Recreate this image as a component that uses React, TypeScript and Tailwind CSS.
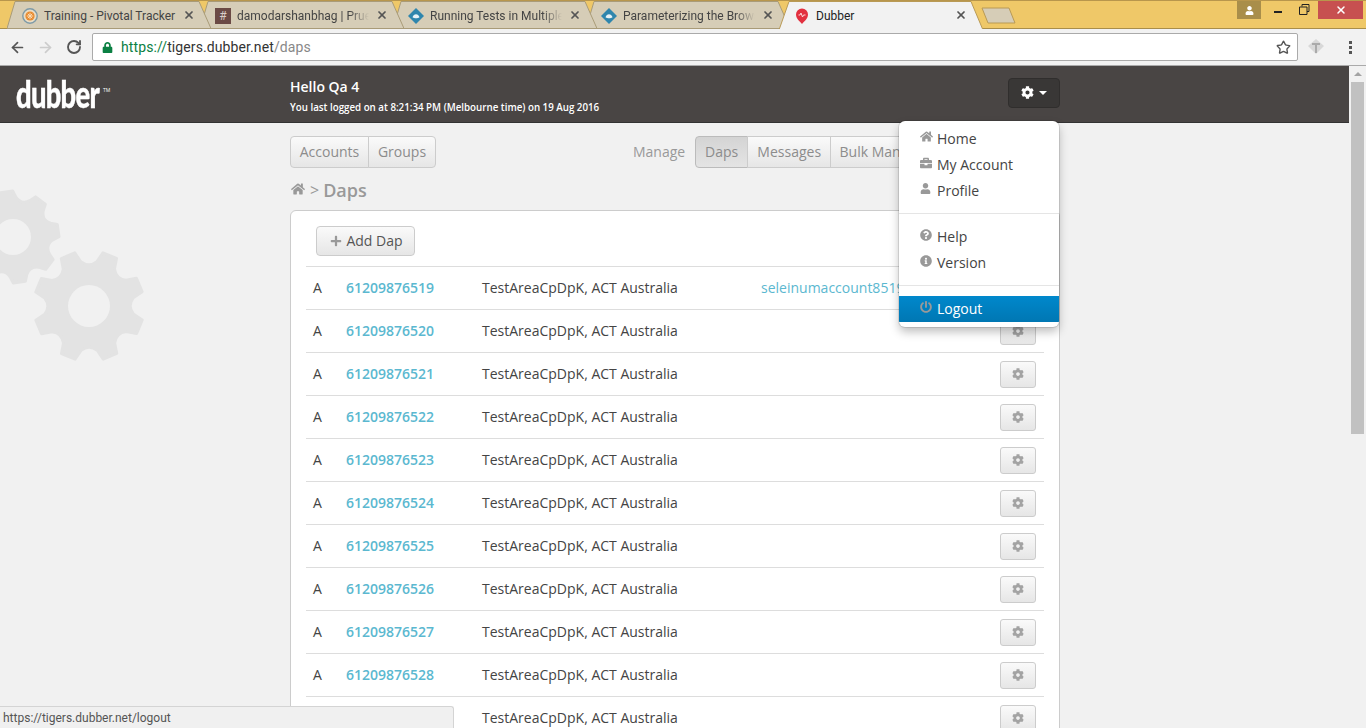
import React from 'react';
import { ArrowLeft, ArrowRight, RotateCw, Star, X } from 'lucide-react';
import {
  FaBriefcase,
  FaCog,
  FaHome,
  FaInfoCircle,
  FaLock,
  FaPlus,
  FaPowerOff,
  FaQuestionCircle,
  FaUser,
} from 'react-icons/fa';

const numbers = [
  '61209876519',
  '61209876520',
  '61209876521',
  '61209876522',
  '61209876523',
  '61209876524',
  '61209876525',
  '61209876526',
  '61209876527',
  '61209876528',
  '61209876529',
];

// builds a gear outline with rounded valleys between the teeth
function gearPath(cx: number, cy: number, outer: number, root: number, teeth: number, phase: number) {
  const step = (Math.PI * 2) / teeth;
  const pt = (r: number, a: number) => `${(cx + r * Math.sin(a)).toFixed(2)} ${(cy - r * Math.cos(a)).toFixed(2)}`;
  let d = '';
  for (let i = 0; i < teeth; i++) {
    const a = phase + i * step;
    d += `${i === 0 ? 'M' : 'L'}${pt(root + 3, a - step * 0.27)} `;
    d += `L${pt(outer, a - step * 0.17)} L${pt(outer, a + step * 0.17)} L${pt(root + 3, a + step * 0.27)} `;
    d += `Q${pt(root - 4, a + step * 0.5)} ${pt(root + 3, a + step * 0.73)} `;
  }
  return d + 'Z';
}

const Gears = () => (
  <svg className="absolute left-0 top-[114px]" width="160" height="190" viewBox="0 0 160 190">
    <g fill="#e3e3e3" stroke="#e3e3e3" strokeWidth="3" strokeLinejoin="round">
      <path d={gearPath(13, 57, 46, 37, 8, -0.14)} />
      <path d={gearPath(89, 126, 55, 42, 8, 0.39)} />
    </g>
    <circle cx="13" cy="57" r="18" fill="#f1f1f1" />
    <circle cx="89" cy="126" r="21" fill="#f1f1f1" />
  </svg>
);

const Favicon = ({ kind }: { kind: string }) => {
  if (kind === 'pivotal') {
    return (
      <svg width="16" height="16" viewBox="0 0 16 16">
        <circle cx="8" cy="8" r="7.2" fill="#e9dcc4" stroke="#7d9aa8" strokeWidth="1.4" />
        <circle cx="8" cy="8" r="4.6" fill="#e98a2e" />
        <path d="M8 4.8v6.4M4.8 8h6.4M5.8 5.8l4.4 4.4M10.2 5.8l-4.4 4.4" stroke="#f8dcb8" strokeWidth="1" />
      </svg>
    );
  }
  if (kind === 'hash') {
    return (
      <div className="w-[16px] h-[16px] bg-[#6b4a45] text-[#d8cdc8] text-[12px] leading-[16px] text-center">#</div>
    );
  }
  if (kind === 'diamond') {
    return (
      <svg width="16" height="16" viewBox="0 0 16 16">
        <path d="M8 0l8 8-8 8-8-8z" fill="#2f86ad" />
        <path d="M4.5 9.2c.6-1.8 2-3 3.5-3s2.900 1.200 3.500 3c-1 .8-2.200 1-3.500 1s-2.500-.2-3.500-1z" fill="#e8f2f6" />
      </svg>
    );
  }
  return (
    <svg width="14" height="16" viewBox="0 0 14 16">
      <path d="M7 16C5 13.600 1 10.800 1 6.600A6 6 0 0 1 13 6.600C13 10.800 9 13.600 7 16z" fill="#e2303f" />
      <path d="M3.500 7h1.500l1-2 1.500 4 1-2h2" fill="none" stroke="#fbd8da" strokeWidth="1" />
    </svg>
  );
};

const tabs = [
  { title: 'Training - Pivotal Tracker', icon: 'pivotal', z: 'z-40', fade: false },
  { title: 'damodarshanbhag | Prueba', icon: 'hash', z: 'z-30', fade: true },
  { title: 'Running Tests in Multiple', icon: 'diamond', z: 'z-20', fade: true },
  { title: 'Parameterizing the Browser', icon: 'diamond', z: 'z-10', fade: true },
];

const Tab = ({ title, icon, z, fade, active }: { title: string; icon: string; z: string; fade?: boolean; active?: boolean }) => (
  <div className={`relative w-[204px] h-[29px] -ml-[11px] first:ml-0 shrink-0 flex items-center pl-[15px] ${z}`}>
    <svg className="absolute left-0 top-0" width="204" height="29" viewBox="0 0 204 29">
      <path
        d={active ? 'M0 29L10 .5H192L204 29Z' : 'M0 27.500L8 .5H192L204 27.500Z'}
        fill={active ? '#f2f2f2' : '#d6cdb7'}
        stroke={active ? '#b99a55' : '#a99b78'}
        strokeWidth="1"
      />
    </svg>
    <div className="relative w-[16px] flex justify-center shrink-0">
      <Favicon kind={icon} />
    </div>
    <div
      className={`relative ml-[6px] w-[132px] overflow-hidden whitespace-nowrap text-[12px] ${
        active ? 'text-[#222]' : 'text-[#444]'
      } ${fade ? '[mask-image:linear-gradient(to_right,black_85%,transparent)]' : ''}`}
    >
      {title}
    </div>
    <X className="absolute left-[176px] top-[8px] text-[#555]" size={12} strokeWidth={3.5} />
  </div>
);

const BrowserChrome = () => (
  <div className="font-['Roboto',sans-serif]">
    <div className="relative h-[29px] bg-[#efc868] border-t border-[#b8964c] flex pl-[7px] overflow-hidden">
      {tabs.map((t) => (
        <Tab key={t.title} {...t} />
      ))}
      <Tab title="Dubber" icon="pin" z="z-50" active />
      <div className="absolute inset-x-0 bottom-0 h-px bg-[#a98e4a]" />
      <svg className="relative z-0 ml-[-2px] mt-[6px]" width="36" height="18" viewBox="0 0 36 18">
        <path d="M1 1H28L34 16H7Z" fill="#d6cdb7" stroke="#b99a55" />
      </svg>
      <div className="ml-auto flex items-start h-[19px] z-50">
        <div className="w-[24px] h-[18px] bg-[#a98e4a] flex items-center justify-center">
          <FaUser className="text-white" size={9} />
        </div>
        <div className="w-[57px] h-[18px] flex items-start pl-[13px]">
          <div className="mt-[10px] w-[8px] h-[2px] bg-[#222]" />
          <svg className="mt-[3px] ml-[17px]" width="11" height="11" viewBox="0 0 11 11">
            <path d="M3 2.500V.5H10V7.500H8M.5 3H8V10.500H.5Z" fill="none" stroke="#222" strokeWidth="1" />
          </svg>
        </div>
        <div className="w-[45px] h-[18px] bg-[#c75050] flex items-center justify-center mr-[3px]">
          <X className="text-white" size={12} strokeWidth={3} />
        </div>
      </div>
    </div>
    <div className="h-[37px] bg-[#f2f2f2] border-b border-[#aaa] flex items-center">
      <ArrowLeft className="ml-[9px] text-[#555]" size={17} strokeWidth={2.4} />
      <ArrowRight className="ml-[11px] text-[#ccc]" size={17} strokeWidth={2.4} />
      <RotateCw className="ml-[12px] text-[#555]" size={16} strokeWidth={2.8} />
      <div className="ml-[10px] w-[1206px] h-[28px] bg-white border border-[#aaa] rounded-[2px] flex items-center">
        <FaLock className="ml-[9px] text-[#0b8043]" size={11} />
        <div className="ml-[8px] mt-px text-[14px] tracking-[0.1px] text-[#333] whitespace-nowrap">
          <span className="text-[#0b8043]">https://</span>tigers.dubber.net<span className="text-[#888]">/daps</span>
        </div>
        <Star className="ml-auto mr-[6px] text-[#555]" size={15} strokeWidth={2.2} />
      </div>
      <svg className="ml-[9px]" width="18" height="18" viewBox="0 0 18 18">
        <path d="M9 1l8 7-8 8-8-8z" fill="#d8d8d8" />
        <path d="M5 6h8M9 6v9" stroke="#aaa" strokeWidth="2" fill="none" />
      </svg>
      <div className="ml-[24px] flex flex-col gap-[2px]">
        <div className="w-[3px] h-[3px] bg-[#555]" />
        <div className="w-[3px] h-[3px] bg-[#555]" />
        <div className="w-[3px] h-[3px] bg-[#555]" />
      </div>
    </div>
  </div>
);

const segment =
  'h-[32px] flex items-center justify-center pb-[2px] border border-[#ccc] text-[14px] text-[#8c8c8c] bg-gradient-to-b from-[#fafafa] to-[#e6e6e6]';

const DropItem = ({ icon, label, active }: { icon: React.ReactNode; label: string; active?: boolean }) => (
  <div
    className={`h-[26px] flex items-center pl-[21px] pb-[2px] text-[14px] ${
      active ? 'bg-gradient-to-b from-[#0088cc] to-[#0077b3] text-white' : 'text-[#444]'
    }`}
  >
    <div className="w-[17px] -mt-[3px] text-[#999] flex">{icon}</div>
    <span>{label}</span>
  </div>
);

const DropMenu = () => (
  <div className="absolute left-[899px] top-[55px] z-50 w-[160px] bg-white rounded-[6px] pt-[5px] pb-[5px] shadow-[0_0_0_1px_rgba(0,0,0,0.1),0_5px_10px_rgba(0,0,0,0.25)] overflow-hidden">
    <DropItem icon={<FaHome size={13} />} label="Home" />
    <DropItem icon={<FaBriefcase size={12} />} label="My Account" />
    <DropItem icon={<FaUser size={11} />} label="Profile" />
    <div className="h-px bg-[#e5e5e5] mt-[9px] mb-[10px]" />
    <DropItem icon={<FaQuestionCircle size={12} />} label="Help" />
    <DropItem icon={<FaInfoCircle size={12} />} label="Version" />
    <div className="h-px bg-[#e5e5e5] mt-[9px] mb-[10px]" />
    <DropItem icon={<FaPowerOff size={12} />} label="Logout" active />
  </div>
);

const Row = ({ num, email }: { num: string; email?: string }) => (
  <div className="h-[43px] border-t border-[#ddd] flex items-center text-[14px] text-[#444]">
    <div className="w-[40px] pl-[7px] pb-[2px]">A</div>
    <div className="w-[136px] pb-[2px] font-semibold text-[#5bb8d0]">{num}</div>
    <div className="w-[279px] pb-[2px]">TestAreaCpDpK, ACT Australia</div>
    <div className="flex-1 pb-[2px] text-[#5bb8d0]">{email}</div>
    <button className="mr-[8px] w-[36px] h-[27px] rounded-[3px] border border-[#ccc] bg-gradient-to-b from-[#fafafa] to-[#e6e6e6] flex items-center justify-center text-[#a3a3a3]">
      <FaCog size={12} />
    </button>
  </div>
);

export default function App() {
  return (
    <div className="h-[728px] w-[1366px] overflow-hidden relative bg-[#f1f1f1]">
      <BrowserChrome />
      <div className="flex h-[662px] font-['Open_Sans',sans-serif]">
        <div className="relative w-[1349px] overflow-hidden">
          <Gears />
          <div className="h-[57px] bg-[#494544] border-b border-[#333] flex items-center">
            <div className="w-[290px] pl-[16px] flex items-start -mt-[2px]">
              <span className="w-[87px] origin-left scale-x-[0.72] font-['Lato',sans-serif] font-black text-[38px] leading-[40px] tracking-[-1px] text-white [-webkit-text-stroke:0.4px_white]">
                dubber
              </span>
              <span className="text-[5px] text-white mt-[14px]">TM</span>
            </div>
            <div className="w-[718px] text-white">
              <div className="text-[14px] font-semibold leading-[20px] mt-[4px]">Hello Qa 4</div>
              <div className="text-[9.750px] font-semibold leading-[14px] mt-[4px]">
                You last logged on at 8:21:34 PM (Melbourne time) on 19 Aug 2016
              </div>
            </div>
            <div className="w-[52px] h-[30px] -mt-[3px] rounded-[4px] bg-[#393736] border border-[#302e2d] flex items-center justify-center gap-[5px] text-white">
              <FaCog size={13} />
              <div className="w-0 h-0 border-x-[4px] border-x-transparent border-t-[4px] border-t-white" />
            </div>
          </div>

          <div className="relative pl-[290px] w-[1060px]">
            <div className="mt-[13px] flex items-center">
              <div className={`${segment} w-[79px] rounded-l-[4px]`}>Accounts</div>
              <div className={`${segment} w-[68px] -ml-px rounded-r-[4px]`}>Groups</div>
              <span className="ml-[197px] pb-[2px] text-[14px] text-[#999]">Manage</span>
              <div className="ml-[10px] flex">
                <div className="h-[32px] w-[53px] pb-[2px] flex items-center justify-center border border-[#bbb] rounded-l-[4px] text-[14px] text-[#8c8c8c] bg-gradient-to-b from-[#d4d4d4] to-[#e4e4e4]">
                  Daps
                </div>
                <div className={`${segment} w-[84px] -ml-px`}>Messages</div>
                <div className={`${segment} w-[103px] -ml-px rounded-r-[4px]`}>Bulk Manage</div>
              </div>
            </div>

            <div className="h-[42px] flex items-center text-[#999]">
              <FaHome className="ml-px" size={14} />
              <span className="ml-[5px] mt-[2px] text-[16px]">&gt;</span>
              <span className="ml-[4px] mt-[2px] text-[18px] font-semibold">Daps</span>
            </div>

            <div className="w-[770px] bg-white border border-[#ccc] rounded-[6px] px-[15px] pt-[15px] pb-[40px]">
              <button className="ml-[10px] mb-[10px] w-[99px] h-[30px] pb-[2px] pl-[2px] rounded-[4px] border border-[#ccc] bg-gradient-to-b from-[#fafafa] to-[#e6e6e6] flex items-center justify-center gap-[4px] text-[14px] text-[#555]">
                <FaPlus className="text-[#999] mt-[2px]" size={12} />
                Add Dap
              </button>
              {numbers.map((n, i) => (
                <Row key={n} num={n} email={i === 0 ? 'seleinumaccount8519' : undefined} />
              ))}
            </div>
          </div>

          <DropMenu />
        </div>

        <div className="w-[17px] bg-[#f1f1f1] flex flex-col items-center">
          <div className="h-[16px] flex items-center">
            <div className="w-0 h-0 border-x-[4px] border-x-transparent border-b-[4px] border-b-[#a3a3a3]" />
          </div>
          <div className="w-[13px] h-[352px] bg-[#c1c1c1]" />
        </div>
      </div>

      <div className="absolute left-0 bottom-0 w-[454px] h-[22px] z-50 bg-[#f0f0f0] border-t border-r border-[#d4d4d4] rounded-tr-[3px] pl-[3px] text-[12px] leading-[22px] text-[#555] font-['Roboto',sans-serif]">
        https://tigers.dubber.net/logout
      </div>
    </div>
  );
}
